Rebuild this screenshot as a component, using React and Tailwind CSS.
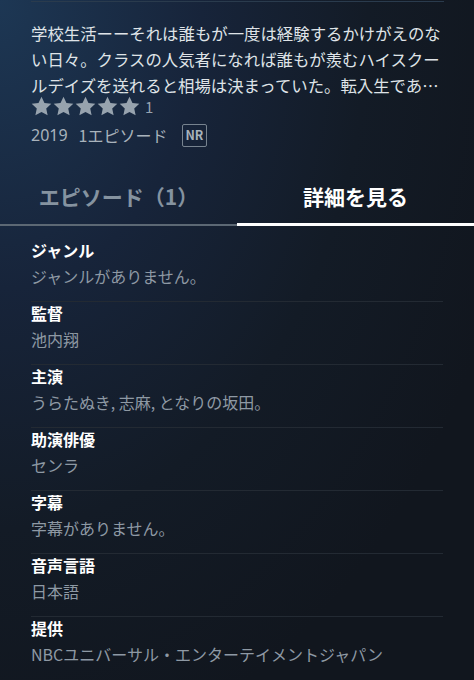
const details = [
  { label: 'ジャンル', value: 'ジャンルがありません。' },
  { label: '監督', value: '池内翔' },
  { label: '主演', value: 'うらたぬき, 志麻, となりの坂田。' },
  { label: '助演俳優', value: 'センラ' },
  { label: '字幕', value: '字幕がありません。' },
  { label: '音声言語', value: '日本語' },
  { label: '提供', value: 'NBCユニバーサル・エンターテイメントジャパン' },
];

function Star() {
  return (
    <svg viewBox="0 0 24 24" className="w-[21px] h-[21px] shrink-0">
      <path
        d="M12 .8l3.4 7.2 7.8.9-5.8 5.4 1.6 7.8L12 18.2 5 22.1l1.6-7.8L.8 8.9l7.8-.9z"
        fill="#97a3ae"
      />
    </svg>
  );
}

export default function App() {
  return (
    <div
      className="w-[474px] h-[680px] overflow-hidden bg-[radial-gradient(ellipse_at_top_left,#1d3754_0%,#17243a_30%,#131b26_55%,#11161e_80%)]"
      style={{ fontFamily: '"Noto Sans CJK JP", "Noto Sans", sans-serif' }}
    >
      <div className="px-[31px]">
        <div className="h-[2px] mr-[-1px] border-b border-[#2a3b4d]" />

        {/* Synopsis */}
        <p className="mt-[18px] text-[16.4px] leading-[26px] text-[#dfe3e7]">
          学校生活ーーそれは誰もが一度は経験するかけがえのない日々。クラスの人気者になれば誰もが羨むハイスクールデイズを送れると相場は決まっていた。転入生であ…
        </p>

        {/* Rating */}
        <div className="flex items-center mt-[-2px] h-[21px]">
          <div className="flex gap-[1px]">
            <Star />
            <Star />
            <Star />
            <Star />
            <Star />
          </div>
          <span className="ml-[5px] text-[15px] text-[#97a3ae] leading-none">1</span>
        </div>

        {/* Meta */}
        <div className="flex items-center mt-[7px] h-[22px] text-[16px] text-[#a9b3bc]">
          <span style={{ fontFamily: '"Noto Sans", sans-serif' }}>2019</span>
          <span className="ml-[11px]">1エピソード</span>
          <span className="ml-[14px] h-[23px] px-[3px] flex items-center border-[1.5px] border-[#77838f] rounded-[2px] text-[12.5px] font-bold text-[#a9b3bc]">
            NR
          </span>
        </div>
      </div>

      {/* Tabs */}
      <div className="grid grid-cols-2 mt-[24px]">
        <div className="h-[56px] flex items-center justify-center border-b-2 border-[#5c6874] text-[21px] font-bold text-[#8593a0]">
          エピソード（1）
        </div>
        <div className="h-[56px] flex items-center justify-center border-b-[3px] border-white text-[21px] font-bold text-white">
          詳細を見る
        </div>
      </div>

      {/* Details */}
      <div className="px-[31px] pt-[13px]">
        {details.map((d, i) => (
          <div
            key={d.label}
            className={i === 0 ? 'pb-[12px]' : 'border-t border-[#232a33] pb-[12px]'}
          >
            <div className="text-[16px] leading-[22px] font-bold text-white">{d.label}</div>
            <div className="mt-[2px] text-[16px] leading-[26px] text-[#8e99a4]">{d.value}</div>
          </div>
        ))}
      </div>
    </div>
  );
}
